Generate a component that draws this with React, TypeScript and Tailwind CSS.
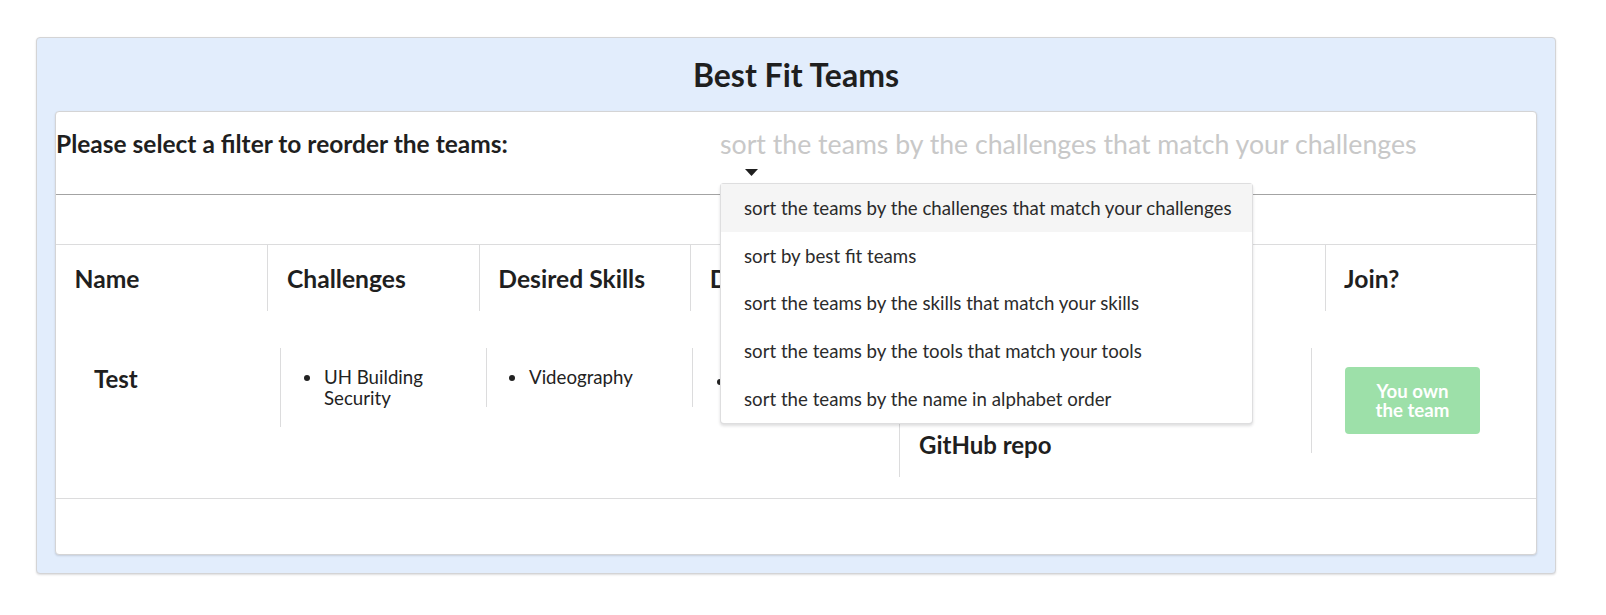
import React from "react";

const Dot = () => <span className="inline-block w-[6px] h-[6px] rounded-full bg-[#222] shrink-0 mt-[8px]" />;

const Item = ({ text }: { text: string }) => (
  <div className="flex items-start">
    <Dot />
    <span className="ml-[14px] text-[18.67px] leading-[21px] text-[#222]">{text}</span>
  </div>
);

export default function App() {
  const options = [
    "sort the teams by the challenges that match your challenges",
    "sort by best fit teams",
    "sort the teams by the skills that match your skills",
    "sort the teams by the tools that match your tools",
    "sort the teams by the name in alphabet order",
  ];
  const headers = ["Name", "Challenges", "Desired Skills", "Desired Tools", "", "", "Join?"];
  return (
    <div className="w-[1606px] h-[615px] bg-white pt-[37px] pl-[36px] font-[family-name:Lato,'Helvetica_Neue',Arial,sans-serif] text-[#1f1f1f]">
      <div className="w-[1520px] h-[537px] border border-[#d4d4d5] rounded-[4px] bg-[#e2edfc] shadow-[0_1px_2px_0_rgba(34,36,38,0.15)] px-[18px] flex flex-col">
        <div className="h-[73px] flex items-center justify-center text-[32px] font-bold leading-none">Best Fit Teams</div>
        <div className="h-[444px] bg-white border border-[#d4d4d5] rounded-[4px] shadow-[0_1px_2px_0_rgba(34,36,38,0.15)] flex flex-col">
          {/* filter row */}
          <div className="h-[83px] border-b border-[#a3a3a3] flex relative">
            <div className="w-[664px] pt-[17px] text-[24.5px] leading-[30px] font-bold">Please select a filter to reorder the teams:</div>
            <div className="relative">
              <div className="pt-[16px] text-[26.67px] leading-[32px] text-[#c8c8c8] whitespace-nowrap">
                sort the teams by the challenges that match your challenges
              </div>
              <svg className="ml-[25px] mt-[9px] block" width="13" height="7" viewBox="0 0 13 7">
                <polygon points="0,0 13,0 6.5,7" fill="#1f1f1f" />
              </svg>
              <div className="absolute left-0 top-[71px] w-[533px] bg-white border border-[rgba(34,36,38,0.15)] rounded-[4px] shadow-[0_2px_3px_0_rgba(34,36,38,0.15)] z-10">
                {options.map((o, i) => (
                  <div
                    key={o}
                    className={`h-[47.8px] flex items-center pl-[23px] text-[18.67px] text-[#2b2b2b] ${i === 0 ? "bg-[#f5f5f5]" : ""}`}
                  >
                    {o}
                  </div>
                ))}
              </div>
            </div>
          </div>
          <div className="h-[49px]" />
          {/* header */}
          <div className="border-t border-[#dcdcdd] grid grid-cols-7 h-[67px]">
            {headers.map((h, i) => (
              <div
                key={i}
                className={`h-[66px] flex items-center pl-[18.5px] text-[24.67px] font-bold whitespace-nowrap overflow-hidden ${i > 0 ? "border-l border-[#dcdcdd]" : ""}`}
              >
                {h}
              </div>
            ))}
          </div>
          {/* body row */}
          <div className="h-[188px] border-b border-[#dcdcdd] flex items-start pt-[37px]">
            <div className="w-[224px] pl-[38px] pt-[17px] text-[24px] leading-[28px] font-bold">Test</div>
            <div className="w-[206px] h-[79px] border-l border-[#dcdcdd] pl-[23px] pr-[16px] pt-[19px]">
              <Item text="UH Building Security" />
            </div>
            <div className="w-[206px] h-[59px] border-l border-[#dcdcdd] pl-[22px] pr-[16px] pt-[19px]">
              <Item text="Videography" />
            </div>
            <div className="w-[207px] h-[59px] border-l border-[#dcdcdd] pl-[24px] pr-[16px] pt-[19px]">
              <Dot />
            </div>
            <div className="w-[412px] h-[129px] border-l border-[#dcdcdd] pl-[19px] pt-[83px]">
              <div className="text-[24px] leading-[28px] font-bold">GitHub repo</div>
            </div>
            <div className="w-[225px] h-[105px] border-l border-[#dcdcdd] pl-[33px] pt-[19px]">
              <div className="w-[135px] h-[67px] rounded-[4px] bg-[#9de0a9] text-white font-bold text-[18.67px] leading-[19px] flex flex-col items-center justify-center text-center">
                <span className="block">You own</span>
                <span className="block">the team</span>
              </div>
            </div>
          </div>
          <div className="flex-1" />
        </div>
      </div>
    </div>
  );
}
